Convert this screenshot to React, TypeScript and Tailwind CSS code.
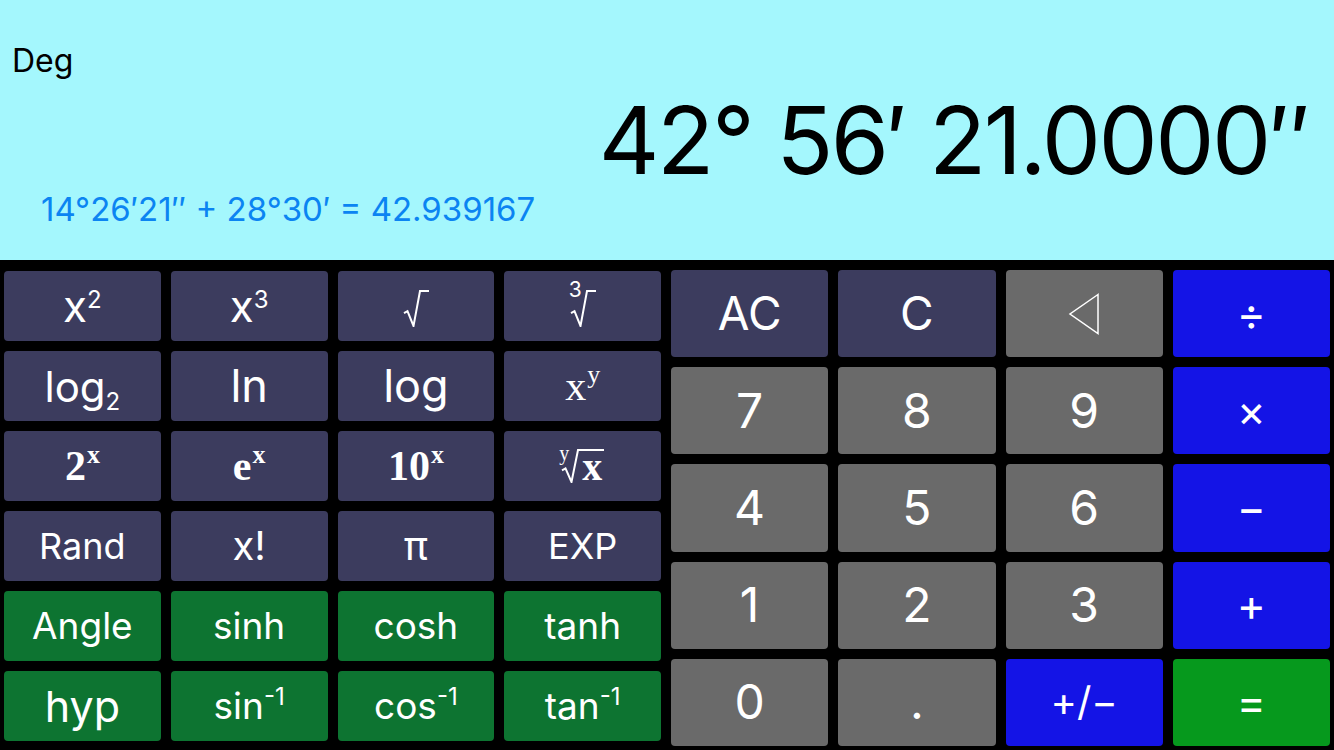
import type { ReactNode } from "react";

type Tone = "fn" | "num" | "op" | "trig" | "eq";

const toneClass: Record<Tone, string> = {
  fn: "bg-[#3c3c5e]",
  num: "bg-[#6a6a6a]",
  op: "bg-[#1414e6]",
  trig: "bg-[#0d7431]",
  eq: "bg-[#06991d]",
};

function Key({ tone, className, children }: { tone: Tone; className?: string; children: ReactNode }) {
  return (
    <button
      className={`flex items-center justify-center rounded-[4px] text-white ${toneClass[tone]} ${className ?? ""}`}
    >
      {children}
    </button>
  );
}

const serif = "font-['Liberation_Serif',serif]";

// small raised / lowered index next to a label
function Sup({ children }: { children: ReactNode }) {
  return <span className="relative -top-[14px] text-[24px]">{children}</span>;
}

function Sub({ children }: { children: ReactNode }) {
  return <span className="relative top-[8px] text-[24px]">{children}</span>;
}

function Pow({ base, exp, bold }: { base: string; exp: string; bold?: boolean }) {
  return (
    <span className={`${serif} ${bold ? "font-bold" : ""} flex items-start leading-none`}>
      <span className="text-[42px]">{base}</span>
      <span className="-mt-[3px] ml-[1px] text-[26px]">{exp}</span>
    </span>
  );
}

// radical sign: small tick, long down stroke, tall up stroke, bar on top
function RootSign({ width = 28, height = 38 }: { width?: number; height?: number }) {
  const tickY = height * 0.6;
  return (
    <svg width={width} height={height} viewBox={`0 0 ${width} ${height}`} fill="none">
      <path
        d={`M1 ${tickY + 1} L4.5 ${tickY - 1} L10.5 ${height - 1} L17 1 H${width}`}
        stroke="white"
        strokeWidth="2"
        strokeLinejoin="miter"
      />
    </svg>
  );
}

function Radical({ index }: { index?: string }) {
  return (
    <span className="relative mt-[4px] flex items-start leading-none">
      {index ? (
        <span className="absolute -left-[1px] -top-[11px] text-[21px] leading-none">{index}</span>
      ) : null}
      <RootSign width={26} height={37} />
    </span>
  );
}

function NthRoot() {
  return (
    <span className={`${serif} relative flex items-start leading-none`}>
      <span className="absolute -left-[2px] -top-[6px] text-[20px] leading-none">y</span>
      <RootSign width={20} height={34} />
      <span className="border-t-[2px] border-white pl-[1px] pr-[2px] text-[40px] font-bold leading-[32px]">x</span>
    </span>
  );
}

function BackArrow() {
  return (
    <svg width="32" height="42" viewBox="0 0 32 42" fill="none">
      <path d="M30 1.5 L2 21 L30 40.5 Z" stroke="white" strokeWidth="1.5" />
    </svg>
  );
}

export default function App() {
  return (
    <div className="flex h-[750px] w-[1334px] flex-col overflow-hidden bg-black font-['Inter','Liberation_Sans',sans-serif]">
      {/* readout */}
      <div className="flex h-[260px] flex-col bg-[#a4f7fd]">
        <div className="pl-[12px] pt-[41px] text-[32px] leading-[40px] text-black">Deg</div>
        <div className="mt-[11px] pr-[26px] text-right text-[94px] leading-[96px] tracking-[-2.5px] text-black">
          42° 56′ 21.0000″
        </div>
        <div className="mt-[1px] pl-[41px] text-[33px] leading-[40px] text-[#0b84f2]">
          14°26′21″ + 28°30′ = 42.939167
        </div>
      </div>

      <div className="flex gap-[10px] px-[4px] pt-[10px]">
        {/* scientific keys */}
        <div className="mt-[1px] grid h-[470px] w-[657px] grid-cols-4 grid-rows-6 gap-[10px]">
          <Key tone="fn" className="text-[44px]">
            <span>
              x<Sup>2</Sup>
            </span>
          </Key>
          <Key tone="fn" className="text-[44px]">
            <span>
              x<Sup>3</Sup>
            </span>
          </Key>
          <Key tone="fn">
            <Radical />
          </Key>
          <Key tone="fn">
            <Radical index="3" />
          </Key>

          <Key tone="fn" className="text-[42px]">
            <span>
              log<Sub>2</Sub>
            </span>
          </Key>
          <Key tone="fn" className="text-[45px]">ln</Key>
          <Key tone="fn" className="text-[45px]">log</Key>
          <Key tone="fn">
            <Pow base="x" exp="y" />
          </Key>

          <Key tone="fn">
            <Pow base="2" exp="x" bold />
          </Key>
          <Key tone="fn">
            <Pow base="e" exp="x" bold />
          </Key>
          <Key tone="fn">
            <Pow base="10" exp="x" bold />
          </Key>
          <Key tone="fn">
            <NthRoot />
          </Key>

          <Key tone="fn" className="text-[36px]">Rand</Key>
          <Key tone="fn" className="text-[40px]">x!</Key>
          <Key tone="fn" className="text-[40px]">π</Key>
          <Key tone="fn" className="text-[36px]">EXP</Key>

          <Key tone="trig" className="text-[37px]">Angle</Key>
          <Key tone="trig" className="text-[37px]">sinh</Key>
          <Key tone="trig" className="text-[37px]">cosh</Key>
          <Key tone="trig" className="text-[37px]">tanh</Key>

          <Key tone="trig" className="text-[43px]">hyp</Key>
          <Key tone="trig" className="text-[37px]">
            <span>
              sin<Sup>-1</Sup>
            </span>
          </Key>
          <Key tone="trig" className="text-[37px]">
            <span>
              cos<Sup>-1</Sup>
            </span>
          </Key>
          <Key tone="trig" className="text-[37px]">
            <span>
              tan<Sup>-1</Sup>
            </span>
          </Key>
        </div>

        {/* number pad */}
        <div className="grid h-[476px] w-[659px] grid-cols-4 grid-rows-5 gap-[10px]">
          <Key tone="fn" className="text-[46px]">AC</Key>
          <Key tone="fn" className="text-[46px]">C</Key>
          <Key tone="num">
            <BackArrow />
          </Key>
          <Key tone="op" className="text-[44px]">÷</Key>

          <Key tone="num" className="text-[48px]">7</Key>
          <Key tone="num" className="text-[48px]">8</Key>
          <Key tone="num" className="text-[48px]">9</Key>
          <Key tone="op" className="text-[44px]">×</Key>

          <Key tone="num" className="text-[48px]">4</Key>
          <Key tone="num" className="text-[48px]">5</Key>
          <Key tone="num" className="text-[48px]">6</Key>
          <Key tone="op" className="text-[44px]">−</Key>

          <Key tone="num" className="text-[48px]">1</Key>
          <Key tone="num" className="text-[48px]">2</Key>
          <Key tone="num" className="text-[48px]">3</Key>
          <Key tone="op" className="text-[44px]">+</Key>

          <Key tone="num" className="text-[48px]">0</Key>
          <Key tone="num" className="text-[48px]">.</Key>
          <Key tone="op" className="text-[40px]">+/−</Key>
          <Key tone="eq" className="text-[44px]">=</Key>
        </div>
      </div>
    </div>
  );
}
